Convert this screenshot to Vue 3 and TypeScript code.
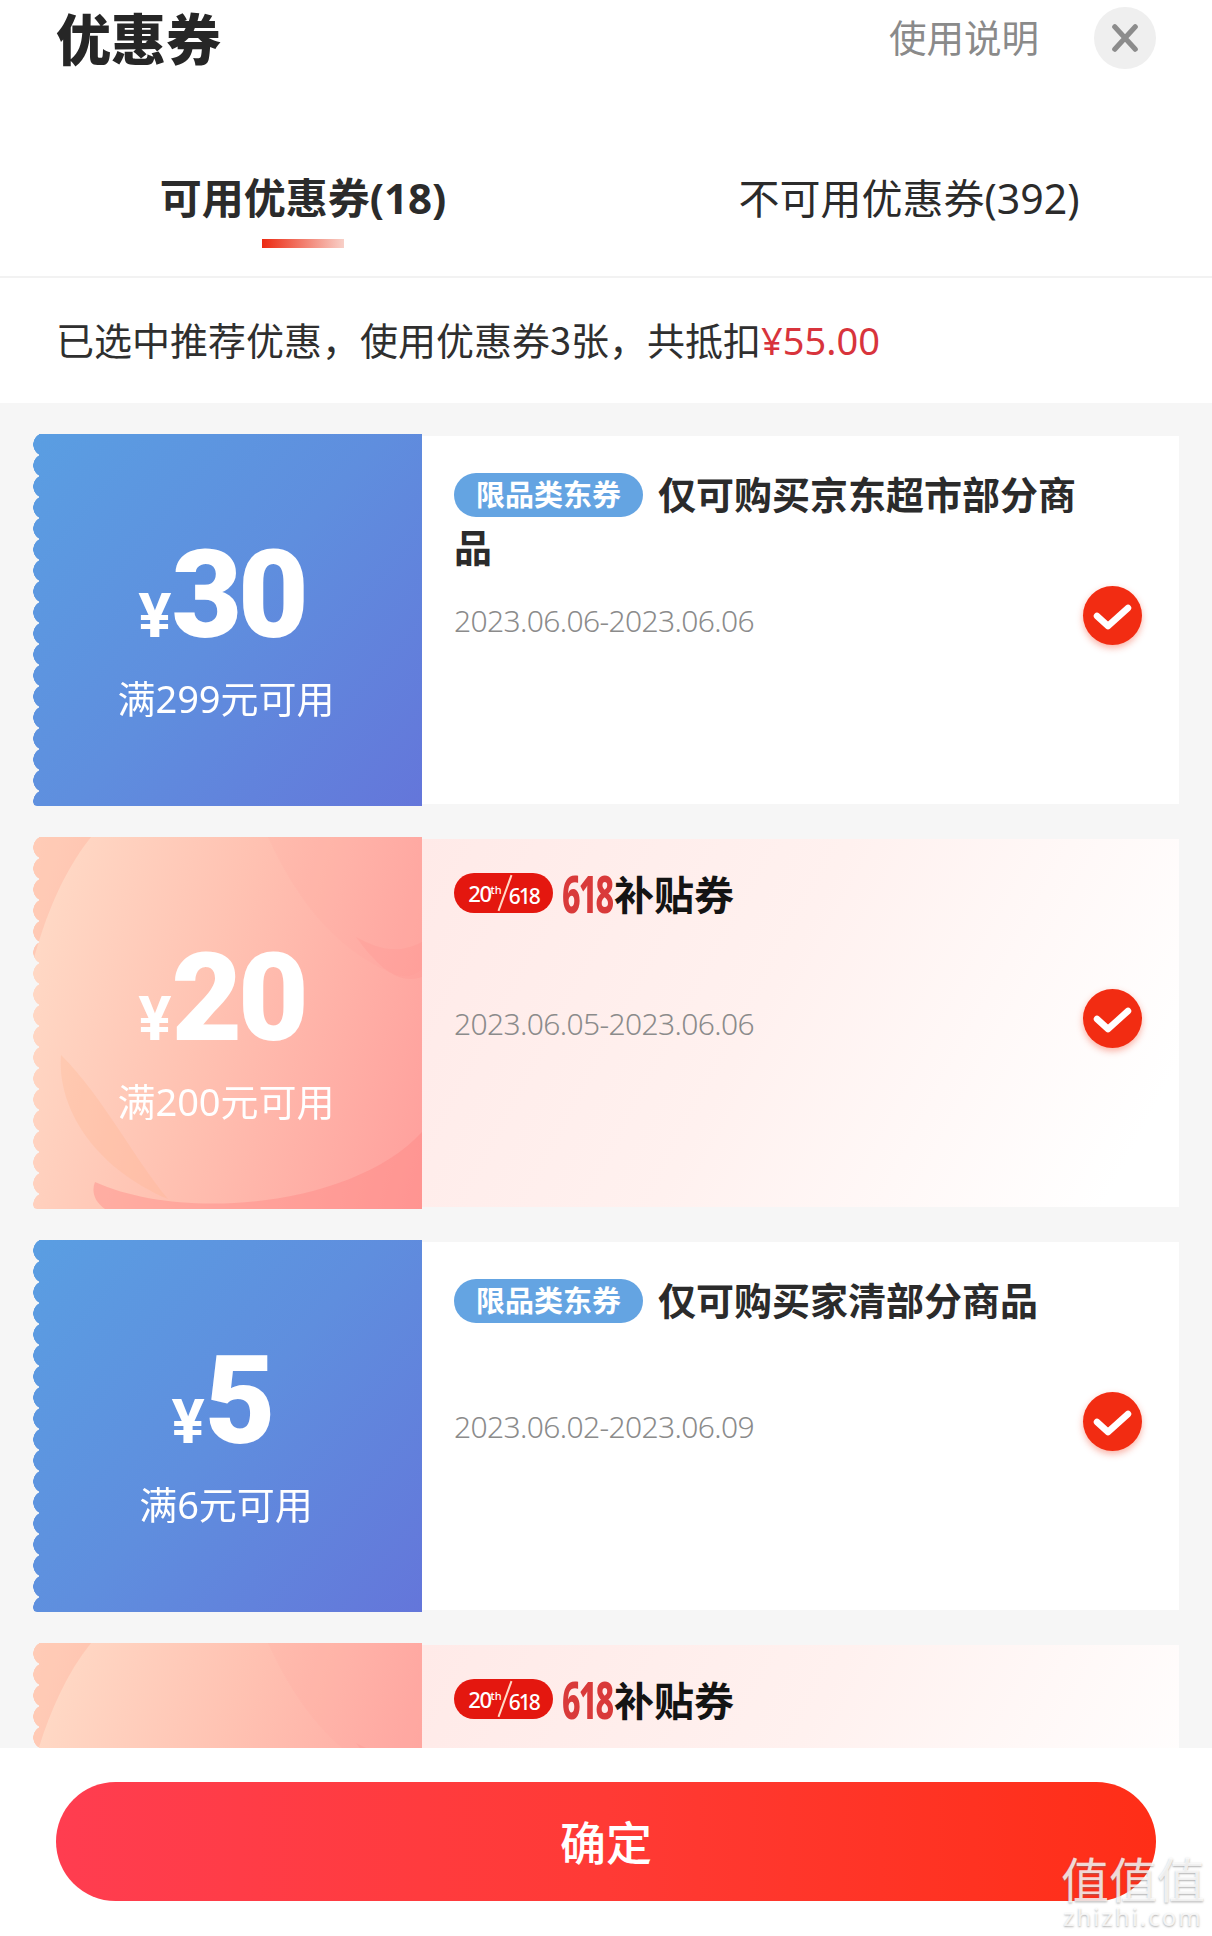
<script setup lang="ts">
interface Coupon {
  id: number
  kind: 'blue' | 'pink'
  amount: string
  rule: string
  title: string
  date: string
}

const coupons: Coupon[] = [
  { id: 1, kind: 'blue', amount: '30', rule: '满299元可用', title: '仅可购买京东超市部分商品', date: '2023.06.06-2023.06.06' },
  { id: 2, kind: 'pink', amount: '20', rule: '满200元可用', title: '', date: '2023.06.05-2023.06.06' },
  { id: 3, kind: 'blue', amount: '5', rule: '满6元可用', title: '仅可购买家清部分商品', date: '2023.06.02-2023.06.09' },
  { id: 4, kind: 'pink', amount: '10', rule: '满100元可用', title: '', date: '2023.06.05-2023.06.06' },
]
</script>

<template>
  <div class="page">
    <header class="head">
      <h1 class="head-title">优惠券</h1>
      <span class="head-help">使用说明</span>
      <span class="head-close">
        <svg width="28" height="28" viewBox="0 0 30 30"><path d="M4 3 L26 27 M26 3 L4 27" stroke="#8c8c8c" stroke-width="5.5" stroke-linecap="round" fill="none" /></svg>
      </span>
    </header>

    <nav class="tabs">
      <div class="tab tab-on">
        <span>可用优惠券(18)</span>
        <i class="tab-bar"></i>
      </div>
      <div class="tab"><span>不可用优惠券(392)</span></div>
    </nav>

    <p class="summary">已选中推荐优惠，使用优惠券3张，共抵扣<em>¥55.00</em></p>

    <main class="list">
      <article v-for="c in coupons" :key="c.id" class="card" :class="c.kind">
        <section class="left">
          <svg v-if="c.kind === 'pink'" class="decor" viewBox="0 0 389 372" preserveAspectRatio="none">
            <path d="M0 0 H58 C30 35 12 80 0 125 Z" fill="#ff9d86" opacity=".26" />
            <path d="M235 0 C262 60 300 110 356 135 C370 141 380 140 389 132 V0 Z" fill="#ff8f8c" opacity=".07" />
            <path d="M323 100 C345 130 365 148 389 140 V105 C365 118 345 112 323 100 Z" fill="#ff7f7c" opacity=".14" />
            <path d="M28 218 C24 270 60 330 135 362 C100 320 70 260 28 218 Z" fill="#ffb48c" opacity=".28" />
            <path d="M62 345 C150 385 320 370 389 295 V372 H72 C62 365 58 355 62 345 Z" fill="#ff8583" opacity=".4" />
          </svg>
          <div class="amount"><span class="yen">¥</span><span class="num">{{ c.amount }}</span></div>
          <div class="rule">{{ c.rule }}</div>
        </section>
        <section class="right">
          <div v-if="c.kind === 'blue'" class="title">
            <span class="tag">限品类东券</span>{{ c.title }}
          </div>
          <div v-else class="title title-618">
            <span class="badge"><b>20<sup>th</sup></b><i class="slash"></i><b class="badge-618">618</b></span>
            <span class="red618">618</span>
            <span class="subsidy">补贴券</span>
          </div>
          <div class="date">{{ c.date }}</div>
          <span class="check">
            <svg width="59" height="59" viewBox="0 0 59 59"><path d="M14 30 L25 40 L45 22" stroke="#fff" stroke-width="6.5" stroke-linecap="round" stroke-linejoin="round" fill="none" /></svg>
          </span>
        </section>
      </article>
    </main>

    <footer class="foot">
      <button class="confirm" type="button"><span>确定</span></button>
      <div class="mark">
        <div class="mark-cn">值值值</div>
        <div class="mark-en">zhizhi.com</div>
      </div>
    </footer>
  </div>
</template>

<style scoped>
.page {
  width: 1212px;
  height: 1936px;
  display: flex;
  flex-direction: column;
  background: #fff;
  overflow: hidden;
  color: #262626;
  font-family: "Noto Sans", "Noto Sans CJK SC", sans-serif;
}
.head {
  height: 76px;
  display: flex;
  align-items: center;
  padding: 0 56px;
  flex: none;
}
.head-title {
  margin: 0 0 4px;
  flex: 1;
  font-size: 55px;
  line-height: 72px;
  font-weight: 900;
  font-family: "Noto Sans CJK SC", sans-serif;
}
.head-help {
  font-size: 37.5px;
  line-height: 50px;
  margin-bottom: 4px;
  color: #8a8a8a;
  margin-right: 55px;
  font-family: "Noto Sans CJK SC", sans-serif;
}
.head-close {
  width: 62px;
  height: 62px;
  border-radius: 50%;
  background: #efefef;
  display: flex;
  align-items: center;
  justify-content: center;
}
.tabs {
  flex: none;
  display: grid;
  grid-template-columns: 606px 606px;
  padding-top: 94px;
  height: 202px;
  box-sizing: border-box;
  border-bottom: 2px solid #f2f2f2;
}
.tab {
  display: flex;
  flex-direction: column;
  align-items: center;
  font-size: 41px;
  line-height: 56px;
  color: #2b2b2b;
}
.tab-on {
  font-size: 42px;
  font-weight: 700;
}
.tab-bar {
  display: block;
  width: 82px;
  height: 9px;
  margin-top: 13px;
  background: linear-gradient(90deg, #ec2a12, #f8d0c8);
}
.summary {
  flex: none;
  margin: 0;
  height: 125px;
  box-sizing: border-box;
  padding-left: 56px;
  font-size: 38px;
  line-height: 121px;
  color: #2f2f2f;
  font-family: "Noto Sans CJK SC", sans-serif;
  white-space: nowrap;
}
.summary em {
  font-style: normal;
  color: #d8343c;
  font-family: "Noto Sans", sans-serif;
}
.list {
  flex: 1;
  min-height: 0;
  overflow: hidden;
  background: #f6f6f6;
  padding: 31px 33px 0;
  display: flex;
  flex-direction: column;
  gap: 31px;
}
.card {
  flex: none;
  height: 372px;
  display: flex;
  width: 1146px;
}
.left {
  position: relative;
  flex: none;
  width: 389px;
  height: 372px;
  color: #fff;
  display: flex;
  flex-direction: column;
  align-items: center;
  overflow: hidden;
  border-radius: 4px 0 0 4px;
  -webkit-mask:
    radial-gradient(circle 12px at 12px 50%, #000 96%, transparent 100%) 0 0 / 13px 21px repeat-y,
    linear-gradient(#000, #000) 6px 0 / 100% 100% no-repeat;
  mask:
    radial-gradient(circle 12px at 12px 50%, #000 96%, transparent 100%) 0 0 / 13px 21px repeat-y,
    linear-gradient(#000, #000) 6px 0 / 100% 100% no-repeat;
}
.blue .left {
  background: linear-gradient(130deg, #5a9ee2 0%, #5f8ede 50%, #6476da 100%);
}
.pink .left {
  background: linear-gradient(105deg, #ffdcc8 0%, #ffc2b2 45%, #ff9f9c 100%);
}
.decor {
  position: absolute;
  left: 0;
  top: 0;
  width: 100%;
  height: 100%;
}
.amount {
  position: relative;
  display: flex;
  align-items: baseline;
  margin-top: 100px;
  margin-right: 12px;
  height: 124px;
  line-height: 124px;
  font-family: Roboto, sans-serif;
  font-weight: 700;
}
.yen {
  font-size: 62px;
}
.num {
  font-size: 122px;
  font-weight: 900;
  letter-spacing: -4px;
}
.rule {
  position: relative;
  margin-top: 15px;
  margin-right: 3px;
  font-size: 38px;
  line-height: 50px;
  font-family: "Noto Sans", "Noto Sans CJK SC", sans-serif;
  font-weight: 400;
}
.right {
  position: relative;
  flex: 1;
  margin: 2px 0;
  padding: 30px 100px 0 32px;
  box-sizing: border-box;
  background: #fff;
}
.pink .right {
  background: linear-gradient(118deg, #ffeae8 0%, #fff1ef 45%, #ffffff 92%);
}
.title {
  min-height: 116px;
  font-size: 38px;
  line-height: 53px;
  font-weight: 700;
  color: #2b2b2b;
  font-family: "Noto Sans CJK SC", sans-serif;
}
.tag {
  display: inline-block;
  vertical-align: top;
  margin: 7px 15px 0 0;
  width: 189px;
  height: 44px;
  border-radius: 22px;
  background: #64a4e2;
  color: #fff;
  text-align: center;
  font-size: 29px;
  line-height: 40px;
  font-weight: 700;
}
.title-618 {
  display: flex;
  align-items: center;
  height: 46px;
  min-height: 0;
  margin-top: -3px;
  margin-bottom: 88px;
  padding-top: 4px;
}
.badge {
  flex: none;
  width: 99px;
  height: 40px;
  border-radius: 20px;
  background: #e4170f;
  color: #fff;
  display: flex;
  align-items: center;
  justify-content: center;
  font-family: "Noto Sans", sans-serif;
  font-size: 22px;
  line-height: 40px;
  font-weight: 500;
  letter-spacing: -1.5px;
}
.badge b {
  font-weight: 500;
}
.badge sup {
  font-size: 11px;
  line-height: 0;
  vertical-align: 8px;
  letter-spacing: 0;
}
.badge-618 {
  font-size: 21px;
  position: relative;
  top: 3px;
  letter-spacing: -2px;
}
.slash {
  display: block;
  width: 2px;
  height: 38px;
  margin: 0 3px 0 2px;
  background: #ffd9c6;
  transform: rotate(20deg);
}
.red618 {
  display: inline-block;
  width: 46px;
  margin-left: 9px;
  font-family: "Noto Sans", sans-serif;
  font-size: 52px;
  line-height: 46px;
  font-weight: 800;
  letter-spacing: -3px;
  color: #d93a3a;
  transform: scaleX(0.62);
  transform-origin: left center;
}
.subsidy {
  margin-left: 6px;
  font-size: 40px;
  line-height: 46px;
  font-weight: 700;
  color: #141414;
}
.date {
  margin-top: 19px;
  font-size: 30px;
  line-height: 40px;
  color: #8b8b8b;
  font-weight: 300;
  letter-spacing: -0.62px;
  font-family: "Noto Sans", sans-serif;
  white-space: nowrap;
}
.check {
  position: absolute;
  right: 37px;
  top: 150px;
  width: 59px;
  height: 59px;
  border-radius: 50%;
  background: #f22c12;
  box-shadow: 0 3px 7px rgba(242, 60, 30, 0.4);
}
.check svg {
  display: block;
}
.foot {
  position: relative;
  flex: none;
  height: 188px;
  background: #fff;
  padding: 34px 56px 0;
  box-sizing: border-box;
}
.confirm {
  display: block;
  width: 1100px;
  height: 119px;
  padding: 0 0 4px;
  border: 0;
  border-radius: 60px;
  background: linear-gradient(90deg, #ff3d50 0%, #ff3a35 50%, #ff2e17 100%);
  color: #fff;
  font-size: 46px;
  font-weight: 500;
  font-family: "Noto Sans CJK SC", sans-serif;
}
.mark {
  position: absolute;
  right: 6px;
  top: 102px;
  width: 146px;
  text-align: center;
  color: rgba(255, 255, 255, 0.8);
  text-shadow: 0 1px 2px rgba(120, 120, 120, 0.6);
}
.mark-cn {
  font-size: 48px;
  line-height: 54px;
  font-weight: 400;
  font-family: "Noto Sans CJK SC", sans-serif;
}
.mark-en {
  font-size: 24px;
  line-height: 26px;
  letter-spacing: 2px;
  white-space: nowrap;
  font-family: "Noto Sans", sans-serif;
}
</style>
